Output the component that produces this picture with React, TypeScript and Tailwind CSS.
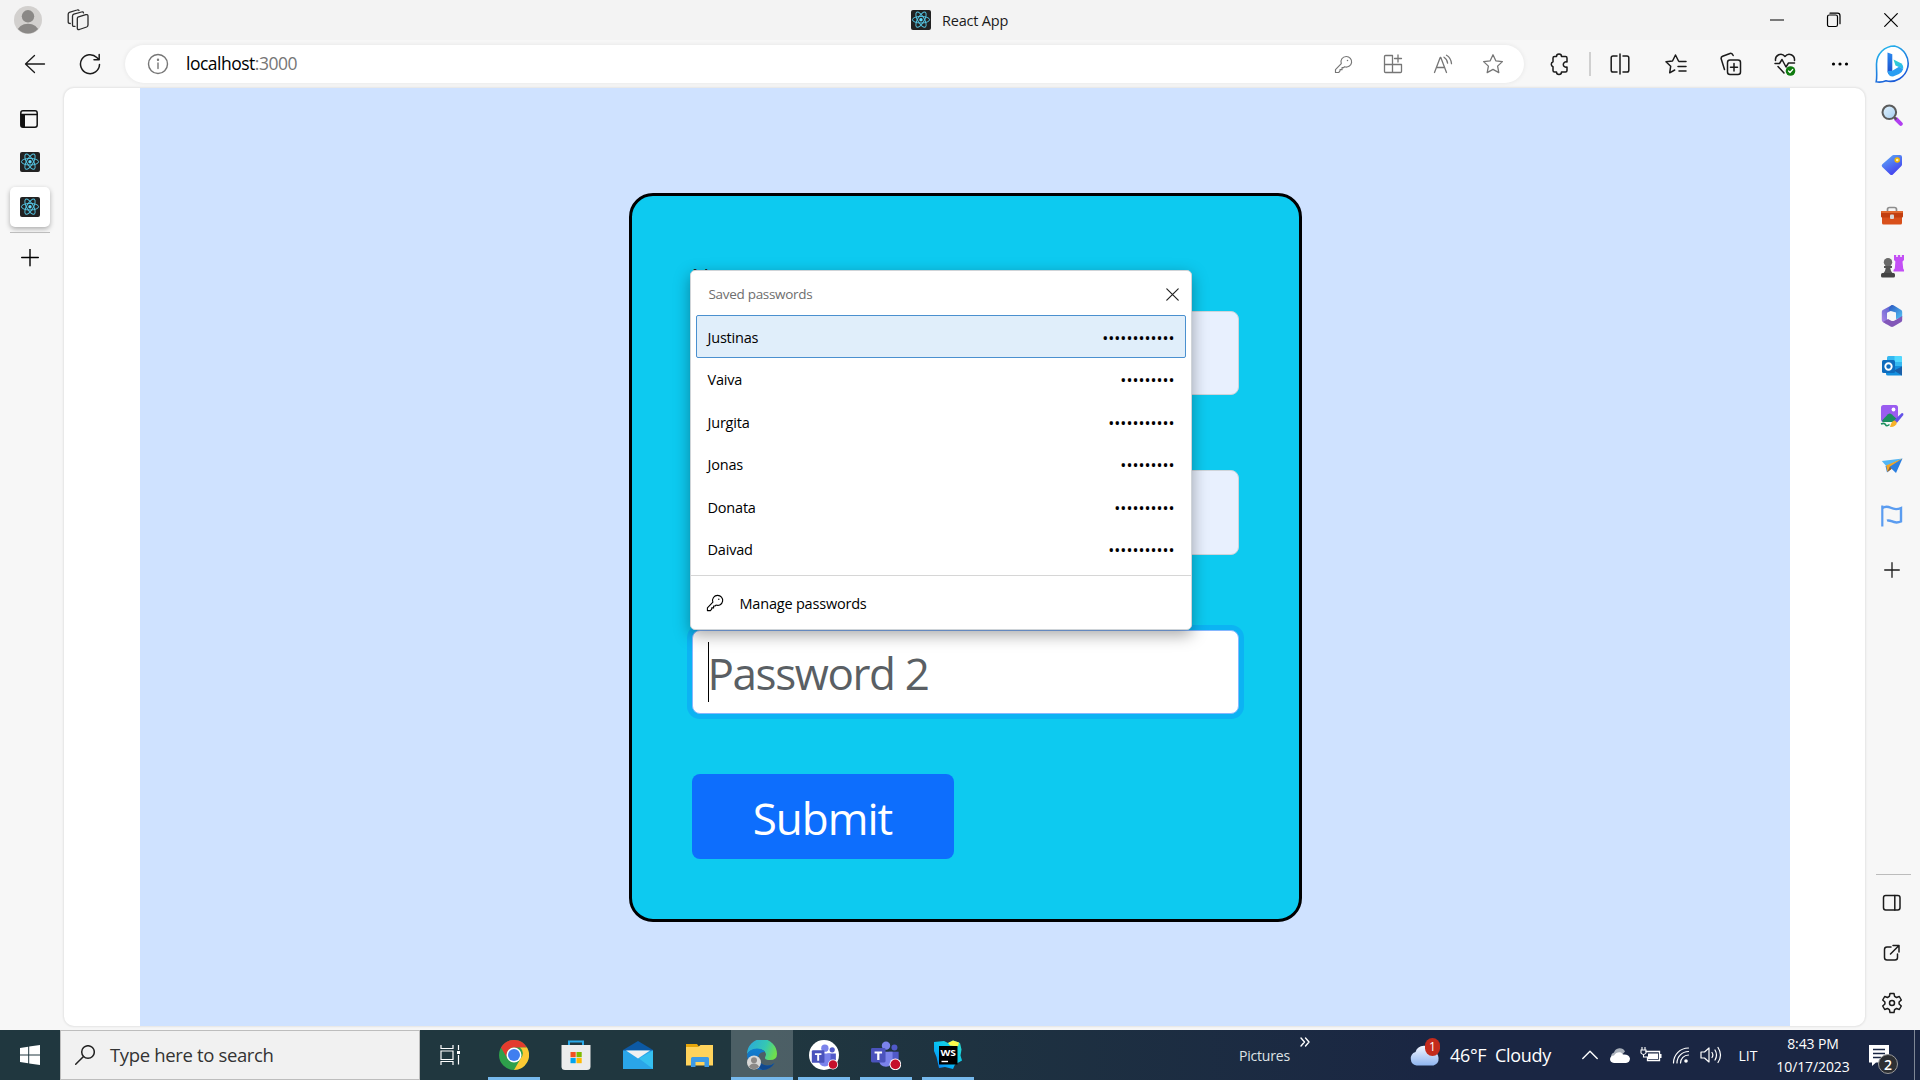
import React from "react";

type Kids = { children?: React.ReactNode; className?: string };

function Line({ w, h, vb, children, sw = 1.3, className = "" }: Kids & { w: number; h: number; vb?: string; sw?: number }) {
  return (
    <svg width={w} height={h} viewBox={vb ?? `0 0 ${w} ${h}`} fill="none" stroke="currentColor" strokeWidth={sw} strokeLinecap="round" strokeLinejoin="round" className={"block shrink-0 " + className}>
      {children}
    </svg>
  );
}

function Art({ w, h, vb, children, className = "" }: Kids & { w: number; h: number; vb?: string }) {
  return (
    <svg width={w} height={h} viewBox={vb ?? `0 0 ${w} ${h}`} className={"block shrink-0 " + className}>
      {children}
    </svg>
  );
}

function ReactIcon() {
  return (
    <Art w={20} h={20}>
      <rect width="20" height="20" rx="2" fill="#222222" />
      <g fill="none" stroke="#53c1de" strokeWidth="1">
        <ellipse cx="10" cy="9.700" rx="8.600" ry="3.300" />
        <ellipse cx="10" cy="9.700" rx="8.600" ry="3.300" transform="rotate(60 10 9.7)" />
        <ellipse cx="10" cy="9.700" rx="8.600" ry="3.300" transform="rotate(120 10 9.7)" />
      </g>
      <circle cx="10" cy="9.700" r="1.700" fill="#61dafb" />
    </Art>
  );
}

function KeyIcon({ size = 18 }: { size?: number }) {
  return (
    <Line w={size} h={size} vb="0 0 18 18" sw={1.1}>
      <path d="M11.6 1.4a5 5 0 1 1-1.6 9.7l-.9.9H7.6v1.9H5.7v1.2L4.4 16.600H1.4v-2.800L6.900 8.200A5 5 0 0 1 11.600 1.400z" />
      <circle cx="12.800" cy="5.200" r=".7" fill="currentColor" stroke="none" />
    </Line>
  );
}

function TitleBar() {
  return (
    <header className="flex h-10 w-full items-center bg-[#f3f3f3]">
      <div className="flex w-14 shrink-0 justify-center">
        <Art w={28} h={28}>
          <defs><clipPath id="av"><circle cx="14" cy="14" r="13.500" /></clipPath></defs>
          <circle cx="14" cy="14" r="14" fill="#d2d0ce" />
          <g clipPath="url(#av)" fill="#8a8886">
            <circle cx="14" cy="10.300" r="6.200" />
            <ellipse cx="14" cy="25.500" rx="10.500" ry="7.800" />
          </g>
        </Art>
      </div>
      <div className="flex w-[43px] shrink-0 justify-center">
        <Line w={22} h={22} className="text-[#2b2b2b]">
          <path d="M10.800 8.200 18.800 5.700Q21 5 21 7.300v8.700q0 1.500-1.300 2l-7.400 2.500Q10.300 21 10.300 19v-9q0-1.300.5-1.800z" />
          <path d="M8 17.300q-2.500.6-2.500-1.200V7.200q0-1.500 1.300-2L14.500 3q1.700-.5 2 .8" />
          <path d="M3.300 14.500Q1.200 14.500 1.200 13V5.300q0-1.500 1.200-2L10 1q1.500-.5 2 .5" />
        </Line>
      </div>
      <div className="ml-[812px] flex w-[830px] shrink-0 items-center">
        <ReactIcon />
        <span className="ml-[11px] mt-px whitespace-pre text-[14.500px] tracking-[-0.2px] text-[#1b1b1b]">React App</span>
      </div>
      <div className="flex shrink-0 items-center text-black">
        <div className="flex w-[71px] justify-center"><Line w={14} h={14} sw={1.200}><path d="M.5 7h13" /></Line></div>
        <div className="flex w-[43px] justify-center">
          <Line w={16} h={16} sw={1.200}><rect x="1.500" y="3" width="10" height="11.500" rx="1.800" /><path d="M4 1.200h7.500q2.500 0 2.500 2.500v8" /></Line>
        </div>
        <div className="flex w-[65px] justify-center pl-[7px]"><Line w={14} h={14} sw={1.200}><path d="m.7.7 12.600 12.600M13.300.7.7 13.300" /></Line></div>
      </div>
    </header>
  );
}

function Slot({ w, children, className = "" }: Kids & { w: string }) {
  return <div className={`flex shrink-0 items-center justify-center ${w} ${className}`}>{children}</div>;
}

function Toolbar() {
  return (
    <div className="flex h-12 w-full items-center bg-[#f7f7f7] text-[#1b1b1b]">
      <Slot w="w-[70px]"><Line w={22} h={20}><path d="M1.500 10h19M10.500 1.500 1.500 10l9 8.500" /></Line></Slot>
      <Slot w="w-10"><Line w={22} h={22} sw={1.500}><path d="M20.500 11.500A9.500 9.500 0 1 1 17.800 4.500l2 2M20.200 1.500v5.200h-5.200" /></Line></Slot>
      <div className="ml-[15px] flex h-[38px] w-[1399px] items-center rounded-full bg-white text-[#767676] shadow-[0_0_5px_rgba(0,0,0,0.08)]">
        <Slot w="w-[65px]">
          <Line w={22} h={22} sw={1.400}><circle cx="11" cy="11" r="9.500" /><path d="M11 10v5.500" /><circle cx="11" cy="6.800" r=".5" fill="currentColor" /></Line>
        </Slot>
        <div className="-ml-[4px] -mt-0.5 whitespace-pre text-[17.500px] tracking-[-0.5px]"><span className="text-black">localhost</span>:3000</div>
        <div className="ml-auto flex pr-[6px]">
          <Slot w="w-[50px]"><KeyIcon size={19} /></Slot>
          <Slot w="w-[50px]">
            <Line w={20} h={20}><path d="M9.500 1.500h-7q-1 0-1 1v15q0 1 1 1h15q1 0 1-1v-7h-17M9.500 1.500v17M15 1v7M11.500 4.500h7" /></Line>
          </Slot>
          <Slot w="w-[50px]">
            <Line w={20} h={20}><path d="m1.500 18.500 5.700-15h.6l5.700 15M3.400 13.500h8.200M11 3.200q3 1.800 3.600 6M13.500 1.200q4.500 2.500 5 8.500" /></Line>
          </Slot>
          <Slot w="w-[50px]">
            <Line w={22} h={22}><path d="m11 1.800 2.800 6 6.600.8-4.800 4.500 1.200 6.500L11 16.400l-5.800 3.200 1.200-6.500-4.800-4.500 6.600-.8z" /></Line>
          </Slot>
        </div>
      </div>
      <Slot w="w-[70px]">
        <Line w={20} h={24} sw={1.500}><path d="M7.500 4.500a2.500 2.500 0 0 1 5 0h4q1.500 0 1.500 1.500v4a2.700 2.700 0 1 0 0 5v3.500q0 1.500-1.500 1.500h-4a2.500 2.500 0 0 1-5 0h-2Q4 20 4 18.500v-3.800a2.600 2.600 0 0 1 0-4.900V6q0-1.500 1.500-1.500z" /></Line>
      </Slot>
      <div className="-ml-[5px] h-6 w-0.5 bg-[#d0d0d0]" />
      <Slot w="w-[57px]">
        <Line w={20} h={22} sw={1.500}><path d="M7 3H3Q1.200 3 1.200 4.800v12.400Q1.200 19 3 19h4M13 3h4q1.800 0 1.800 1.800v12.400Q18.800 19 17 19h-4M10 1v20" /></Line>
      </Slot>
      <Slot w="w-[55px]">
        <Line w={22} h={22} sw={1.500}><path d="m13.500 8-3-6-3 6-6.500.8 4.700 4.400-1 6.600 5-2.800M14 8.500h7M13 13.500h8M14 18h7" /></Line>
      </Slot>
      <Slot w="w-[55px]">
        <Line w={22} h={24} sw={1.500}><rect x="7.500" y="8" width="13" height="14.500" rx="2.500" /><path d="M14 11.500v7.500M10.500 15.200h7M4.500 17.500 1.300 7.300q-.7-2.200 1.300-3L10 1.500q2-.7 3.200 2" /></Line>
      </Slot>
      <Slot w="w-[54px]">
        <Line w={22} h={24} sw={1.500}>
          <path d="M1.500 8.500C.8 3 7.500 0 11 4.500 14.500 0 21 3 20.500 8.500M4 14.500l6 6.500M1 11.500h4.500l2.500-4 4 7.500 2.500-4h6" />
          <circle cx="16.500" cy="19" r="4.800" fill="#0f7b0f" stroke="none" />
          <path d="m14.500 19 1.500 1.500 2.700-3" stroke="#fff" strokeWidth="1.200" />
        </Line>
      </Slot>
      <Slot w="w-14">
        <Art w={18} h={6}><circle cx="2.500" cy="3" r="1.600" /><circle cx="9" cy="3" r="1.600" /><circle cx="15.500" cy="3" r="1.600" /></Art>
      </Slot>
      <Slot w="w-[52px]">
        <Art w={38} h={38}>
          <defs>
            <linearGradient id="bo" x1="0" y1="0" x2=".5" y2="1"><stop stopColor="#28c1ee" /><stop offset="1" stopColor="#1a5bd8" /></linearGradient>
            <linearGradient id="bi" x1="0" y1="0" x2="0" y2="1"><stop stopColor="#2b8af0" /><stop offset="1" stopColor="#1b48c8" /></linearGradient>
            <linearGradient id="bj" x1="0" y1="0" x2="1" y2="1"><stop stopColor="#35d3c9" /><stop offset="1" stopColor="#26b8f2" /></linearGradient>
          </defs>
          <path d="M19.500 1A17.500 17.500 0 1 1 11 35.800C8 37 4 37.300 1.200 36.800 2.200 33 1.500 27 1.500 19A18 18 0 0 1 19.500 1z" fill="#fff" stroke="url(#bo)" strokeWidth="1.600" />
          <path d="M12.500 7.500 17.300 9.300V26l-2 4Q12.500 29 12.500 26z" fill="url(#bi)" />
          <path d="M18.500 14.500 26 18.300Q28.500 20 28.200 24L20.500 20.500z" fill="url(#bj)" />
          <path d="M12.600 26 17.300 25.800 24 21.700l4.200 2.300Q27.500 27 24 29l-6 2.600Q13 31.500 12.600 26z" fill="#2a9df2" />
        </Art>
      </Slot>
    </div>
  );
}

function LeftTabs() {
  return (
    <aside className="flex w-16 shrink-0 flex-col pl-2.5">
      <div className="mt-[22px] flex h-[18px] w-10 justify-center pr-0.5">
        <Line w={18} h={18} sw={1.500} className="text-[#111]"><rect x=".8" y=".8" width="16.400" height="16.400" rx="2.200" /><path d="M1 4.500h16" /><path d="M1 5h4v12H2.500Q1 17 1 15.500z" fill="currentColor" stroke="none" /></Line>
      </div>
      <div className="mt-6 flex w-10 justify-center"><ReactIcon /></div>
      <div className="mt-[15px] flex h-10 w-10 items-center justify-center rounded-[5px] bg-white shadow-[0_2px_5px_rgba(0,0,0,0.3)]"><ReactIcon /></div>
      <div className="mt-[5px] h-px w-10 bg-[#bdbdbd]" />
      <div className="mt-4 flex w-10 justify-center pr-px">
        <Line w={18} h={18} sw={1.400} className="text-black"><path d="M.7 8.500h16.600M9 .2v16.600" /></Line>
      </div>
    </aside>
  );
}

const saved = [
  ["Justinas", 12],
  ["Vaiva", 9],
  ["Jurgita", 11],
  ["Jonas", 9],
  ["Donata", 10],
  ["Daivad", 11],
] as const;

function SavedPasswords() {
  return (
    <div className="absolute left-[58px] top-[74px] h-[360px] w-[502px] rounded-[5px] border border-[#cfd4d8] bg-white text-[15px] text-black shadow-[0_5px_16px_rgba(0,0,0,0.35)]">
      <div className="flex h-[44px] items-center justify-between pl-[18px] pr-[12px] pt-[3px]">
        <span className="text-[13.500px] tracking-[-0.3px] text-[#6e6e6e]">Saved passwords</span>
        <Line w={13} h={13} sw={1.200} className="text-[#222]"><path d="m.8.8 11.400 11.400M12.200.8.8 12.200" /></Line>
      </div>
      <div className="px-[5px]">
        {saved.map(([name, n], i) => (
          <div key={name} className={"flex h-[42.500px] items-center justify-between rounded-[2px] border pl-[11px] pr-[10px] pt-[2.500px] " + (i === 0 ? "border-[#4a90cf] bg-[#e0eefa]" : "border-transparent")}>
            <span className="text-[14.500px] tracking-[-0.2px]">{name}</span>
            <span className="text-[16px]">{"•".repeat(n)}</span>
          </div>
        ))}
      </div>
      <div className="mt-[5px] flex h-[54px] items-center border-t border-[#d6d6d6] pl-[15px]">
        <KeyIcon size={18} />
        <span className="ml-[16px] mt-0.5 text-[14.500px] tracking-[-0.2px]">Manage passwords</span>
      </div>
    </div>
  );
}

function Page() {
  return (
    <main className="h-[938px] w-[1801px] shrink-0 overflow-hidden rounded-[10px] bg-white shadow-[0_0_2px_1px_rgba(0,0,0,0.08)]">
      <div className="ml-[76px] flex h-full w-[1650px] justify-center bg-[#cfe2ff]">
        <form className="relative mt-[105px] h-[729px] w-[673px] rounded-[24px] border-[3px] border-black bg-[#0dcaf0] px-[60px] pt-[62px]">
          <label className="block h-[53px] text-2xl leading-[37px] text-[#212529]">Name</label>
          <div className="h-[84px] rounded-lg border border-[#ced4da] bg-[#e8f0fe]" />
          <div className="mt-[75px] h-[85px] rounded-lg border border-[#ced4da] bg-[#e8f0fe]" />
          <div className="mt-[75px] flex h-[84px] items-center rounded-lg border border-[#86b7fe] bg-white pl-[15px] shadow-[0_0_0_5px_rgba(13,110,253,0.25)]">
            <div className="h-[60px] w-px bg-black" />
            <span className="-ml-px mt-px whitespace-pre text-[44px] leading-none tracking-[-1.400px] text-[#5a5f64]">Password 2</span>
          </div>
          <div className="mt-[60px] flex h-[85px] w-[262px] items-center justify-center rounded-lg bg-[#0d6efd]">
            <span className="mt-[3px] text-[44px] leading-none tracking-[-1px] text-white">Submit</span>
          </div>
          <SavedPasswords />
        </form>
      </div>
    </main>
  );
}

function Cell({ children }: Kids) {
  return <div className="flex h-[50px] w-[42px] items-center justify-center">{children}</div>;
}

function RightSidebar() {
  return (
    <aside className="ml-[6px] flex h-[942px] w-[42px] flex-col pt-0.5 text-[#1b1b1b]">
      <Cell>
        <Art w={22} h={22}>
          <defs><linearGradient id="mg" x1="0" y1="0" x2="1" y2="1"><stop stopColor="#e3f3fd" /><stop offset="1" stopColor="#a5cdf0" /></linearGradient></defs>
          <path d="m15 15 4.800 4.800" stroke="#b13ef0" strokeWidth="4" strokeLinecap="round" /><path d="m12.500 12.500 3 3" stroke="#555" strokeWidth="2" />
          <circle cx="8.300" cy="8.300" r="6.800" fill="url(#mg)" stroke="#5b5b5b" strokeWidth="2" />
        </Art>
      </Cell>
      <Cell>
        <Art w={22} h={22}>
          <defs><linearGradient id="tg" x1="0" y1="0" x2=".6" y2="1"><stop stopColor="#5eb2f7" /><stop offset="1" stopColor="#443fee" /></linearGradient></defs>
          <path d="M12.500 1H19q2 0 2 2v7.500q0 .8-.6 1.400l-8.500 8.500q-1.400 1.200-2.800 0L1.300 13q-1.300-1.300 0-2.700L11 1.700q.7-.7 1.500-.7z" fill="url(#tg)" />
          <circle cx="16.200" cy="6" r="2" fill="#fff3b0" stroke="#f5b800" strokeWidth="1.500" />
        </Art>
      </Cell>
      <Cell>
        <Art w={24} h={20} className="mt-0.5">
          <path d="M7.500 5V3.500Q7.500 1.500 9.500 1.500h5q2 0 2 2V5" fill="none" stroke="#8d8d8d" strokeWidth="1.700" />
          <rect x="2" y="9" width="20" height="9.500" rx="1.500" fill="#d9501b" /><rect x="1" y="5" width="22" height="6.500" rx="1" fill="#c23f10" />
          <rect x="1" y="5" width="22" height="2" rx="1" fill="#e26a30" /><rect x="10" y="8.500" width="4" height="4.500" rx="1" fill="#d8d8d8" />
        </Art>
      </Cell>
      <Cell>
        <Art w={24} h={24} className="mt-px">
          <path d="M14 1h2.200v2h1.600V1h2.400v2h1.600V1H24v5l-1.500 1.500.7 7L24 16v1.500H13.500V16l1.300-1.500.6-7L14 6z" fill="#c34ff5" />
          <circle cx="8" cy="8.200" r="4.200" fill="#6a6a6a" /><path d="M4 12h8v2h-1.700q.2 3.500 2.500 5.500H3.200q2.300-2 2.500-5.500H4z" fill="#555" /><rect x="1" y="19" width="14" height="4.500" rx="1.500" fill="#444" />
        </Art>
      </Cell>
      <Cell>
        <Art w={22} h={24} className="mt-px">
          <defs><linearGradient id="m1" x1="0" y1="1" x2="1" y2="0"><stop stopColor="#b489e8" /><stop offset="1" stopColor="#3d55c8" /></linearGradient><linearGradient id="m2" x1="0" y1="0" x2="1" y2="1"><stop stopColor="#2a56c0" /><stop offset="1" stopColor="#54c4f5" /></linearGradient></defs>
          <path d="M11 1 1.800 6Q.8 6.600.8 8v8q0 1.500 1 2l4.200 2.500V8.700L14 5z" fill="url(#m1)" />
          <path d="M11 1q-3.500 2-3 5.500l7 2v6.500l5.500-1q.7-.5.7-1.500V8q0-1.400-1-2L12.500 1.200q-.8-.4-1.500-.2z" fill="url(#m2)" />
          <path d="m2 18 7.500 4.500q1.500.9 3 0l7.700-4.500q1-.6 1-2v-4l-8 4.700q-1.500.8-3 0L7 15z" fill="#8257b8" />
          <path d="m11 7.800 4 2.200v4.200l-4 2.300-4-2.300V10z" fill="#f7f7f7" />
        </Art>
      </Cell>
      <Cell>
        <Art w={22} h={22} className="mt-px">
          <rect x="6" y="1" width="15" height="12" rx="1.500" fill="#35b8f1" /><path d="M13.500 1H19.500Q21 1 21 2.500V7h-7.500z" fill="#50d9ff" />
          <path d="M5 11h16v9.500H7Q5 20.500 5 19z" fill="#1490df" /><path d="m13 15.500 8-4v9z" fill="#1a5fa8" />
          <rect x="1" y="5" width="13" height="13" rx="1.500" fill="#0f6cbd" /><circle cx="7.500" cy="11.500" r="3.200" fill="none" stroke="#fff" strokeWidth="1.900" />
        </Art>
      </Cell>
      <Cell>
        <Art w={24} h={24} className="mt-0.5">
          <rect x="1" y="1" width="17" height="17" rx="2.500" fill="#9a5cf0" /><path d="m2 16.500 6-6.200q1.700-1.500 3.500 0L18 16q-.8 2-2.500 2h-12Q2 18 2 16.500z" fill="#1c8f5f" />
          <circle cx="13.500" cy="5.500" r="1.900" fill="#fff" /><path d="M1 20q3.500-1.500 4.500.7t4-.2" fill="none" stroke="#1c8f5f" strokeWidth="1.600" />
          <path d="m14 16.500 7.500-7.300q2.300-.5 1.900 1.800L16.800 19z" fill="#6352e8" /><path d="M10 23q2.200-7.500 5.200-6.200 3.300 2.200-.3 5-2 1.500-4.900 1.200z" fill="#f6b32b" />
        </Art>
      </Cell>
      <Cell>
        <Art w={22} h={20} className="mt-px">
          <path d="M21.500 2.500 15 17l-4.500-4.200L6 16.500 4.500 10z" fill="#2b7fe0" /><path d="M21.500 2.500.8 5l4.400 5z" fill="#52b6f6" /><path d="m21.500 2.500-16.300 7L6.500 16l2.500-5.500z" fill="#f4a623" /><path d="m6.500 16 4-3L9 10.500z" fill="#a85e10" />
        </Art>
      </Cell>
      <Cell>
        <Art w={24} h={24} className="mt-px">
          <path d="M2.300 1.500v21" stroke="#5a9cf0" strokeWidth="2.200" /><path d="M2.300 4c3-2 5.500-1.700 8.500-.2s6 2 10.200.2v13.500c-4 1.700-7.200.8-9.500-.3-2-.9-3.500-.9-4.500-.5" fill="none" stroke="#5a9cf0" strokeWidth="2.400" />
        </Art>
      </Cell>
      <div className="flex h-[58px] w-[42px] items-center justify-center pt-px"><Line w={16} h={16} sw={1.300}><path d="M.7 8h14.600M8 .7v14.600" /></Line></div>
      <div className="ml-[5px] mt-auto h-px w-[35px] bg-[#bcbcbc]" />
      <div className="mt-[3px]"><Cell><Line w={20} h={18} sw={1.500}><rect x="1.500" y="1.500" width="16.500" height="14.500" rx="2.200" /><path d="M12.800 1.500V16" /></Line></Cell></div>
      <Cell><Line w={18} h={18} sw={1.500}><path d="M8 3H4Q1.500 3 1.500 5.500v8Q1.500 16 4 16h8q2.500 0 2.500-2.500V10M10 1.500h6V8M16 1.500l-8.500 8.500" /></Line></Cell>
      <div className="mb-0.5">
        <Cell>
          <Line w={22} h={22} sw={1.500}>
            <path d="M9 1.500h4l.6 2.900 1.900 1.100 2.800-1 2 3.500-2.200 2v2l2.200 2-2 3.500-2.800-1-1.900 1.100-.6 2.900H9l-.6-2.900-1.900-1.100-2.800 1-2-3.500 2.200-2v-2L1.700 8l2-3.500 2.800 1 1.900-1.100z" /><circle cx="11" cy="11" r="2.500" />
          </Line>
        </Cell>
      </div>
    </aside>
  );
}

function TaskIcon({ children, active, running }: Kids & { active?: boolean; running?: boolean }) {
  return (
    <div className={"relative flex h-[50px] w-[62px] items-center justify-center " + (active ? "bg-white/20" : "")}>
      {children}
      {running && <div className={"absolute bottom-0 h-[3px] bg-[#76b9ed] " + (active ? "inset-x-0" : "inset-x-[5px]")} />}
    </div>
  );
}

function TeamsMark() {
  return (
    <>
      <circle cx="16" cy="6" r="4.500" fill="#7b83eb" /><circle cx="25" cy="8" r="3.200" fill="#5059c9" />
      <path d="M19 12.500h10.500v7q0 4-4 4.500H19z" fill="#5059c9" /><path d="M8.500 12.500h14.500v9q-.5 6.500-7 7-7-.5-7.500-7z" fill="#7b83eb" />
      <rect x="0" y="8.500" width="15.500" height="15.500" rx="1.500" fill="#4b53bc" /><path d="M3.800 12.300h8v2.100H9v7H6.600v-7H3.800z" fill="#fff" />
      <circle cx="26" cy="26" r="6.200" fill="#fff" /><circle cx="26" cy="26" r="5.200" fill="#c50f2b" />
    </>
  );
}

function Taskbar() {
  return (
    <footer className="flex h-[50px] w-full items-center bg-linear-to-r from-[#20373f] from-40% to-[#1a2643] to-75% text-white">
      <Slot w="w-[60px]">
        <Art w={20} h={20}><path d="M0 2.900 8.200 1.700v7.700H0zM9.200 1.500 20 0v9.400H9.200zM0 10.500h8.200v7.800L0 17.100zM9.200 10.500H20V20L9.200 18.400z" fill="#fff" /></Art>
      </Slot>
      <div className="flex h-[50px] w-[360px] items-center border border-[#bdbdbd] bg-[#f1f1f1] pl-[14px]">
        <Line w={20} h={20} sw={1.500} className="text-[#222]"><circle cx="13" cy="7" r="6.300" /><path d="M8.500 11.500.7 19.300" /></Line>
        <span className="ml-[15px] whitespace-pre text-[18.500px] tracking-[-0.35px] text-[#333]">Type here to search</span>
      </div>
      <Slot w="w-[60px]">
        <Art w={20} h={20}><path d="M1 0v3.500h12V0M1 20v-3.500h12V20M1 6h12v8.500H1zM18.500 0v5M18.500 10v9.500" fill="none" stroke="#fff" strokeWidth="1.200" /><rect x="17" y="6" width="3" height="3" fill="#fff" /></Art>
      </Slot>
      <div className="flex w-[516px] pl-[3px]">
        <TaskIcon running>
          <Art w={30} h={30}>
            <circle cx="15" cy="15" r="15" fill="#2ea04b" />
            <path d="M2 7.500A15 15 0 0 1 28 7.500H15A7.500 7.500 0 0 0 8.500 18.700z" fill="#e33b2e" /><path d="M28 7.500A15 15 0 0 1 15 30l6.500-11.200A7.500 7.500 0 0 0 21 7.500z" fill="#fcc934" />
            <circle cx="15" cy="15" r="7.500" fill="#fff" /><circle cx="15" cy="15" r="6" fill="#3f7ef0" />
          </Art>
        </TaskIcon>
        <TaskIcon>
          <Art w={30} h={30}>
            <path d="M8 6V1.500h14V6" fill="none" stroke="#29a9ea" strokeWidth="2" /><path d="M.5 5h29v21.500Q29.500 30 26 30H4Q.5 30 .5 26.500z" fill="#ececec" />
            <path d="M9.500 12h5.200v5.200H9.500z" fill="#f25022" /><path d="M15.500 12h5.200v5.200h-5.200z" fill="#7fba00" /><path d="M9.500 18h5.200v5.200H9.500z" fill="#00a4ef" /><path d="M15.500 18h5.200v5.200h-5.200z" fill="#ffb900" />
          </Art>
        </TaskIcon>
        <TaskIcon>
          <Art w={30} h={28}><path d="M0 9 15 0l15 9v4H0z" fill="#0c59a4" /><path d="M0 9.500h30V28H0z" fill="#2aa5e8" /><path d="M30 9.500V28L16 17.500z" fill="#35c0f0" /><path d="M3 9.500h24L15 17.500z" fill="#f1f1f1" /></Art>
        </TaskIcon>
        <TaskIcon>
          <Art w={30} h={26}><path d="M1 2h11l3 4H1z" fill="#e5a50a" /><path d="M1 5h12l2.500-2H28v20.500H1z" fill="#ffd35c" /><path d="M6 25V16.500q0-1.500 1.500-1.500h15q1.500 0 1.500 1.500V25h-4.500v-5h-9v5z" fill="#3d9be6" /></Art>
        </TaskIcon>
        <TaskIcon running active>
          <Art w={30} h={30}>
            <defs><linearGradient id="e1" x1="0" y1=".2" x2="1" y2=".5"><stop stopColor="#2aa8dc" /><stop offset=".6" stopColor="#35c7b3" /><stop offset="1" stopColor="#6fe04c" /></linearGradient><linearGradient id="e2" x1="0" y1="0" x2="0" y2="1"><stop stopColor="#0f7fd0" /><stop offset="1" stopColor="#1565b8" /></linearGradient></defs>
            <path d="M0 14A15 15 0 0 1 30 14q0 6-7 6-5 0-5-2c0-1.500 1-2 1-4Q18 9.500 12 9 4 8.500 0 14z" fill="url(#e1)" />
            <path d="M0 15Q2 8.500 10 8.500q5 0 8 3.500-5-.5-6.500 4-1 8 7.500 9.500 5 .5 8.500-2.500Q23 30 15 30 1 29 0 15z" fill="url(#e2)" />
            <path d="M11.500 16q-1 8.500 8.500 9.500 4 .3 7.500-2.500Q23.500 30 15.500 30 8 26 11.500 16z" fill="#11498f" />
            <circle cx="7" cy="22.500" r="7" fill="#d8d8d6" /><circle cx="7" cy="20.200" r="3" fill="#8a8886" /><path d="M2 27q1-3.500 5-3.500t5 3.500q-5 4.500-10 0z" fill="#8a8886" />
          </Art>
        </TaskIcon>
        <TaskIcon running>
          <Art w={30} h={30} vb="0 0 32 32"><circle cx="16" cy="16" r="16" fill="#fff" /><g transform="translate(3 3.500) scale(.87)"><TeamsMark /></g></Art>
        </TaskIcon>
        <TaskIcon running><Art w={30} h={30} vb="0 0 32 32"><TeamsMark /></Art></TaskIcon>
        <TaskIcon running>
          <Art w={30} h={30}>
            <defs><linearGradient id="ws" x1="0" y1="1" x2="1" y2="0"><stop stopColor="#087cfa" /><stop offset=".5" stopColor="#07c3f2" /><stop offset="1" stopColor="#2fe0c8" /></linearGradient></defs>
            <path d="m1 2 10-1 4 2 5-2.500 7 2.500 1.500 6.500-1 6 1.500 5-7 4-2 4.500-8-2L6 28 3.500 17 1 11z" fill="url(#ws)" /><path d="m15 3 5-2.500 6 2-1 4-8-1z" fill="#fcf84a" />
            <rect x="6" y="6" width="18.500" height="18.500" fill="#000" />
            <text x="15.200" y="15.500" textAnchor="middle" fontSize="9.500" fontWeight="700" fill="#fff" textLength="15.500" lengthAdjust="spacingAndGlyphs">WS</text>
            <path d="M8.500 21.500h6.500" stroke="#fff" strokeWidth="1.400" />
          </Art>
        </TaskIcon>
      </div>
      <span className="ml-[243px] text-[14px] tracking-[-0.2px] text-[#dfe3e6]">Pictures</span>
      <Line w={10} h={10} sw={1.400} className="-mt-[26px] ml-[10px]"><path d="m1 1 3.500 4L1 9M5.500 1 9 5 5.500 9" /></Line>
      <div className="relative ml-[99px] flex items-center">
        <Art w={32} h={34}>
          <defs><linearGradient id="cl" x1="0" y1="0" x2="0" y2="1"><stop stopColor="#f3f7ff" /><stop offset="1" stopColor="#8fb5f0" /></linearGradient></defs>
          <path d="M7.500 32.500A7 7 0 0 1 6.500 19 9 9 0 0 1 23.500 18.500a7.200 7.200 0 0 1 1 14z" transform="translate(0 -5)" fill="url(#cl)" />
        </Art>
        <div className="absolute left-[16px] top-0 flex h-[18px] w-[15px] items-center justify-center rounded-full bg-[#c42b1c] text-[12px]">1</div>
      </div>
      <span className="ml-[9px] whitespace-pre text-[18px] tracking-[-0.3px]">46°F  Cloudy</span>
      <div className="ml-auto flex h-[50px] items-center">
        <Slot w="w-[30px]"><Line w={16} h={10} sw={1.400}><path d="m.8 8.500 7.200-7.200 7.200 7.200" /></Line></Slot>
        <Slot w="w-[30px]"><Art w={22} h={18}><path d="M6 16a5 5 0 0 1-1-9.500 6 6 0 0 1 11-1L10 12z" fill="#a9b0ba" /><path d="M5 17q-4-.5-4-4 .5-3.500 4-3.500 2.500-4 7-3l2 2q6-.5 7 4-.2 4-4 4.500z" fill="#fff" /></Art></Slot>
        <Slot w="w-[31px]"><Art w={22} h={18}><path d="M5.500 5.500h14v9h-12v-4" fill="none" stroke="#fff" strokeWidth="1.300" /><rect x="8" y="7.500" width="10" height="5.500" fill="#fff" /><rect x="19.500" y="8" width="2" height="4" fill="#fff" /><path d="M1 4h5v3q-2.500 3-5 0zM2 1v3M5 1v3M3.500 8v3H7" stroke="#fff" fill="none" strokeWidth="1.100" /></Art></Slot>
        <Slot w="w-[30px]"><Line w={18} h={18} sw={1.200}><path d="M1.500 17A15 15 0 0 1 16.500 2M5 17A11.500 11.500 0 0 1 16.500 5.500M8.500 17A8 8 0 0 1 16.500 9" /><circle cx="14" cy="15" r="1.800" fill="#fff" stroke="none" /></Line></Slot>
        <Slot w="w-[30px]"><Line w={22} h={20} sw={1.200}><path d="M1 7h3.500L9 3v14l-4.500-4H1zM12 7.500q1.700 2.500 0 5M15 5q3 5 0 10M18 2.500q5 7.500 0 15" /></Line></Slot>
        <Slot w="w-[44px]"><span className="text-[14px]">LIT</span></Slot>
        <div className="flex w-[86px] flex-col items-center text-[14px] leading-[23px] tracking-[-0.1px]">
          <span>8:43 PM</span>
          <span>10/17/2023</span>
        </div>
        <div className="relative flex w-[50px] justify-center pr-[4px]">
          <Art w={22} h={22}><path d="M1 1h20v17.500H8L4 22v-3.500H1z" fill="#fff" /><path d="M5 5.500h12M5 9.500h12M5 13.500h8" stroke="#1a2643" strokeWidth="1.300" /></Art>
          <div className="absolute left-[22px] top-[10px] flex h-5 w-5 items-center justify-center rounded-full border border-[#9a9a9a] bg-[#2d2f33] text-[14px] font-semibold">2</div>
        </div>
      </div>
      <div className="ml-[8px] mr-[5px] h-[50px] w-px bg-[#7e8795]" />
    </footer>
  );
}

export default function App() {
  return (
    <div className="flex h-[1080px] w-[1920px] flex-col overflow-hidden bg-[#f7f7f7] font-['Open_Sans',sans-serif]">
      <TitleBar />
      <Toolbar />
      <div className="flex h-[942px] w-full">
        <LeftTabs />
        <Page />
        <RightSidebar />
      </div>
      <Taskbar />
    </div>
  );
}
